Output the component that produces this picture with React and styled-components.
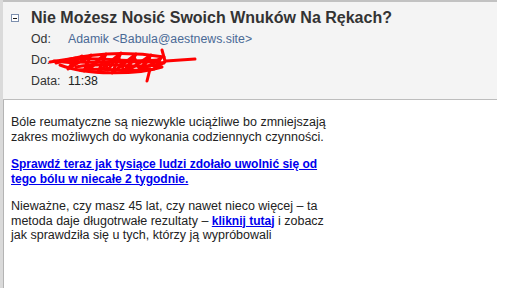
import React from "react";
import styled, { createGlobalStyle } from "styled-components";

const Global = createGlobalStyle`
  html, body { margin: 0; padding: 0; background: #ffffff; }
  body { font-family: "Liberation Sans", Arial, sans-serif; }
`;

const Frame = styled.div`
  width: 494px;
  height: 288px;
  border-left: 3px solid #dadada;
  box-shadow: inset 1px 0 0 #b4b4b4;
  display: flex;
  flex-direction: column;
`;

const Header = styled.div`
  background: #f4f4f4;
  border-top: 2px solid #c2c2c2;
  border-bottom: 1px solid #bdbdbd;
  padding: 6px 0 7px 8px;
  display: flex;
  flex-direction: column;
`;

const TitleRow = styled.div`
  display: flex;
  align-items: center;
  height: 20px;
  margin-bottom: 1px;
`;

const Toggle = styled.span`
  width: 6px;
  height: 6px;
  border: 1px solid #7d8fae;
  background: #ffffff;
  margin-right: 12px;
  display: flex;
  align-items: center;
  justify-content: center;
  &::after {
    content: "";
    width: 4px;
    height: 1px;
    background: #1a1a1a;
  }
`;

const Title = styled.h1`
  margin: 0;
  font-size: 16px;
  font-weight: bold;
  color: #333333;
  line-height: 20px;
`;

const Row = styled.div`
  display: flex;
  align-items: center;
  height: 21px;
  line-height: 21px;
  font-size: 12.3px;
  padding-left: 20px;
`;

const Label = styled.span`
  width: 37px;
  color: #333333;
`;

const Value = styled.span`
  color: ${(p) => (p.$link ? "#4a6a96" : "#222222")};
  position: relative;
`;

const Scribble = styled.svg`
  position: absolute;
  left: -22px;
  top: -12px;
  overflow: visible;
`;

const Body = styled.div`
  padding: 2px 0 0 8px;
  width: 380px;
  font-size: 12.5px;
  color: #222222;
`;

const P = styled.p`
  margin: 13px 0;
  line-height: 14.5px;
  white-space: nowrap;
`;

const A = styled.a`
  color: #0000ee;
  font-weight: bold;
  font-size: 12px;
  text-decoration: underline;
`;

export default function App() {
  return (
    <>
      <Global />
      <Frame>
        <Header>
          <TitleRow>
            <Toggle />
            <Title>Nie Możesz Nosić Swoich Wnuków Na Rękach?</Title>
          </TitleRow>
          <Row>
            <Label>Od:</Label>
            <Value $link>Adamik &lt;Babula@aestnews.site&gt;</Value>
          </Row>
          <Row>
            <Label>Do:</Label>
            <Value>
              <Scribble width="150" height="34" viewBox="0 0 150 34">
                <g fill="none" stroke="#ff0000" strokeWidth="3" strokeLinejoin="round" strokeLinecap="round">
                  <path d="M4 13 L30 9 L22 20 L45 6 L38 22 L60 5 L52 23 L75 4 L66 24 L90 5 L80 23 L105 6 L95 22 L115 9 L108 20 L120 12 L149 10" />
                  <path d="M8 12 L28 14 L36 7 L44 20 L56 8 L62 21 L72 7 L78 22 L88 8 L94 21 L102 8 L110 19" />
                  <path d="M10 14 C40 4, 80 2, 118 8" />
                  <path d="M14 16 C40 26, 90 26, 116 18" />
                  <path d="M20 12 C50 16, 90 10, 118 14" />
                  <path d="M30 18 C60 12, 90 20, 110 16" />
                  <path d="M26 10 C55 8, 85 14, 112 11" />
                  <path d="M34 21 C60 18, 85 24, 104 20" />
                  <path d="M116 1 L119 12" />
                  <path d="M104 20 L101 32" />
                </g>
              </Scribble>
            </Value>
          </Row>
          <Row>
            <Label>Data:</Label>
            <Value>11:38</Value>
          </Row>
        </Header>
        <Body>
          <P>
            Bóle reumatyczne są niezwykle uciążliwe bo zmniejszają
            <br />
            zakres możliwych do wykonania codziennych czynności.
          </P>
          <P>
            <A href="#">
              Sprawdź teraz jak tysiące ludzi zdołało uwolnić się od
              <br />
              tego bólu w niecałe 2 tygodnie.
            </A>
          </P>
          <P>
            Nieważne, czy masz 45 lat, czy nawet nieco więcej – ta
            <br />
            metoda daje długotrwałe rezultaty – <A href="#">kliknij tutaj</A> i zobacz
            <br />
            jak sprawdziła się u tych, którzy ją wypróbowali
          </P>
        </Body>
      </Frame>
    </>
  );
}
